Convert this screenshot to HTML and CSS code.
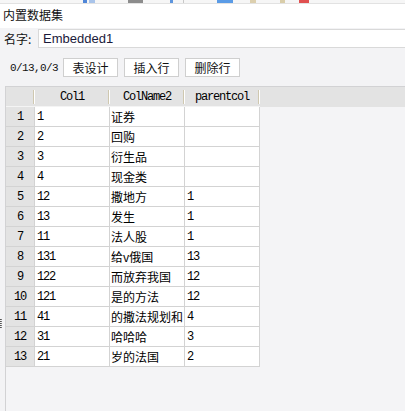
FILE: index.html
```html
<!DOCTYPE html>
<html lang="zh">
<head>
<meta charset="utf-8">
<title>内置数据集</title>
<link rel="stylesheet" href="styles.css">
</head>
<body>
<div class="strip">
  <span class="frag f1"></span><span class="frag f2"></span><span class="frag f3"></span><span class="frag f4"></span><span class="frag f5"></span><span class="frag f6"></span><span class="frag f7"></span><span class="frag f8"></span><span class="frag f9"></span>
</div>
<div class="titlebar">内置数据集</div>
<div class="name-row">
  <span class="label">名字:</span>
  <div class="input">Embedded1</div>
</div>
<div class="action-row">
  <span class="count">0/13,0/3</span>
  <button class="btn">表设计</button>
  <button class="btn">插入行</button>
  <button class="btn">删除行</button>
</div>
<div class="work">
  <div class="gutter"><span class="handle"></span></div>
  <div class="panel">
    <table class="grid">
      <thead>
        <tr><th class="rh"></th><th>Col1</th><th>ColName2</th><th>parentcol</th></tr>
      </thead>
      <tbody>
        <tr><td class="rh">1</td><td class="num">1</td><td class="cn">证券</td><td class="num"></td></tr>
        <tr><td class="rh">2</td><td class="num">2</td><td class="cn">回购</td><td class="num"></td></tr>
        <tr><td class="rh">3</td><td class="num">3</td><td class="cn">衍生品</td><td class="num"></td></tr>
        <tr><td class="rh">4</td><td class="num">4</td><td class="cn">现金类</td><td class="num"></td></tr>
        <tr><td class="rh">5</td><td class="num">12</td><td class="cn">撒地方</td><td class="num">1</td></tr>
        <tr><td class="rh">6</td><td class="num">13</td><td class="cn">发生</td><td class="num">1</td></tr>
        <tr><td class="rh">7</td><td class="num">11</td><td class="cn">法人股</td><td class="num">1</td></tr>
        <tr><td class="rh">8</td><td class="num">131</td><td class="cn">给v俄国</td><td class="num">13</td></tr>
        <tr><td class="rh">9</td><td class="num">122</td><td class="cn">而放弃我国</td><td class="num">12</td></tr>
        <tr><td class="rh">10</td><td class="num">121</td><td class="cn">是的方法</td><td class="num">12</td></tr>
        <tr><td class="rh">11</td><td class="num">41</td><td class="cn">的撒法规划和</td><td class="num">4</td></tr>
        <tr><td class="rh">12</td><td class="num">31</td><td class="cn">哈哈哈</td><td class="num">3</td></tr>
        <tr><td class="rh">13</td><td class="num">21</td><td class="cn">岁的法国</td><td class="num">2</td></tr>
      </tbody>
    </table>
  </div>
</div>
</body>
</html>
```
FILE: styles.css
```css
html, body {
  margin: 0;
  padding: 0;
  height: 100%;
}
body {
  background: #f3f3f5;
  font-family: "Noto Sans CJK SC", "Noto Sans", sans-serif;
  font-size: 12px;
  color: #1a1a1a;
  overflow: hidden;
  display: flex;
  flex-direction: column;
}

/* cut-off toolbar at the very top */
.strip {
  height: 3px;
  border-bottom: 1px solid #e2e2e2;
  background: #f6f6f6;
  display: flex;
  flex-shrink: 0;
}
.frag { height: 3px; display: block; }
.f1 { margin-left: 83px; width: 4px; background: #4f86d8; }
.f2 { margin-left: 2px; width: 6px; background: #a9c4ea; }
.f3 { margin-left: 33px; width: 15px; background: #8c8c8c; }
.f4 { margin-left: 27px; width: 3px; background: #5d95dd; }
.f5 { margin-left: 10px; width: 1px; background: #c8c8c8; }
.f6 { margin-left: 33px; width: 16px; background: #5a9be6; }
.f7 { margin-left: 17px; width: 6px; background: #dccfae; }
.f8 { margin-left: 24px; width: 5px; background: #d9cda9; }
.f9 { margin-left: 14px; width: 10px; background: #e05050; }

.titlebar {
  height: 24px;
  line-height: 22px;
  background: #ffffff;
  padding-left: 3px;
  font-size: 12px;
  color: #111;
  flex-shrink: 0;
}

.name-row {
  height: 24px;
  display: flex;
  align-items: flex-start;
  padding-left: 4px;
  flex-shrink: 0;
}
.label {
  margin-top: 3px;
  font-size: 12px;
  line-height: 16px;
  color: #111;
  width: 34px;
}
.input {
  margin-top: 1px;
  flex: 1;
  height: 17px;
  margin-right: -4px;
  background: #ffffff;
  border: 1px solid #d9d9d9;
  font-family: "Liberation Sans", "Noto Sans", sans-serif;
  font-size: 13px;
  line-height: 17px;
  padding-left: 4px;
  color: #1a1a3a;
}

.action-row {
  display: flex;
  align-items: center;
  padding-top: 6px;
  padding-left: 10px;
  height: 19px;
  flex-shrink: 0;
}
.count {
  font-family: "Liberation Mono", monospace;
  font-size: 11px;
  letter-spacing: -0.6px;
  width: 53px;
  color: #111;
}
.btn {
  width: 55px;
  height: 19px;
  margin: 0 6px 0 0;
  padding: 0;
  background: #ffffff;
  border: 1px solid #cfcfcf;
  border-radius: 0;
  font-family: "Noto Sans CJK SC", sans-serif;
  font-size: 12px;
  line-height: 17px;
  color: #111;
}

.work {
  margin-top: 9px;
  flex: 1;
  display: flex;
}
.gutter {
  width: 5px;
  flex-shrink: 0;
  display: flex;
  flex-direction: column;
}
.handle {
  margin-top: 233px;
  width: 2px;
  height: 9px;
  border-left: 1px dotted #555;
  border-right: 1px dotted #777;
  box-sizing: border-box;
}
.panel {
  flex: 1;
  border-left: 1px solid #d2d2d4;
  border-top: 1px solid #d2d2d4;
  background:
    linear-gradient(#e3e3e3, #e3e3e3) top left / 100% 20px no-repeat,
    #f4f4f6;
}

.grid {
  border-collapse: separate;
  border-spacing: 0;
  table-layout: fixed;
}
.grid th,
.grid td {
  padding: 0;
  height: 19px;
  border-right: 1px solid #d3d3d3;
  border-bottom: 1px solid #d3d3d3;
  white-space: nowrap;
  overflow: hidden;
  box-sizing: content-box;
}
.grid th {
  width: 74px;
  font-family: "Liberation Mono", monospace;
  font-size: 12px;
  letter-spacing: -1.2px;
  font-weight: normal;
  text-align: center;
  color: #000;
  background:
    linear-gradient(#cfc8b0, #cfc8b0) right 1px center / 1px 14px no-repeat,
    linear-gradient(#ffffff, #ffffff) right 0 center / 1px 14px no-repeat,
    #e3e3e3;
  border-right: none;
  padding-right: 1px;
  border-bottom: 1px solid #f4f4f4;
}
.grid th.rh { width: 28px; }
.grid td {
  width: 74px;
  background: #ffffff;
  color: #000;
}
.grid td.rh {
  width: 28px;
  background: #e3e3e3;
  text-align: center;
  font-family: "Liberation Mono", monospace;
  font-size: 12px;
  letter-spacing: -1.2px;
}
.grid td.num {
  padding-left: 2px;
  width: 72px;
  font-family: "Liberation Mono", monospace;
  font-size: 12px;
  letter-spacing: -1.2px;
}
.grid td.cn {
  padding-left: 1px;
  width: 73px;
  font-family: "Noto Sans CJK SC", sans-serif;
  font-size: 12px;
  line-height: 19px;
}
```
